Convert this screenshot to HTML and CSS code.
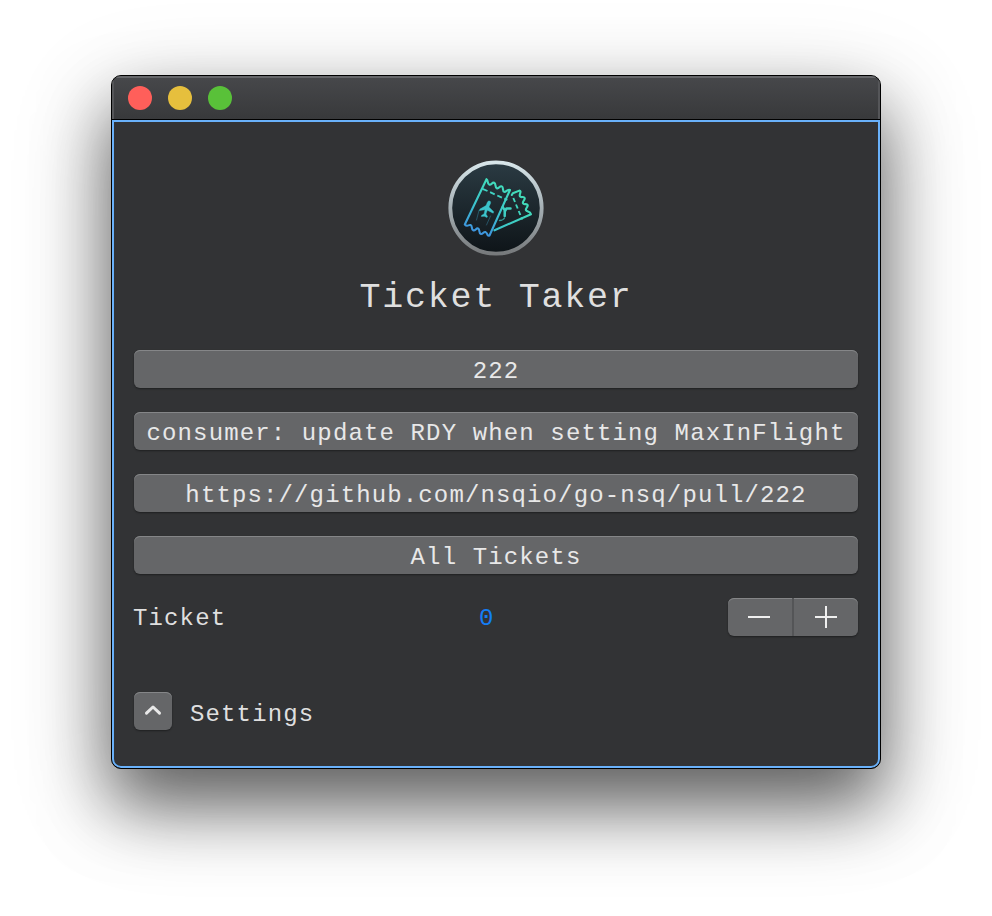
FILE: index.html
```
<!DOCTYPE html>
<html lang="en">
<head>
<meta charset="utf-8">
<title>Ticket Taker</title>
<link rel="stylesheet" href="styles.css">
</head>
<body>
<main class="window">
  <header class="titlebar">
    <span class="light close"></span>
    <span class="light minimize"></span>
    <span class="light zoom"></span>
  </header>
  <section class="content">
    <svg class="logo" viewBox="0 0 96 96" fill="none">
      <defs>
        <linearGradient id="rim" x1="0" y1="0" x2="0" y2="1"><stop stop-color="#d8e6ea"/><stop offset=".45" stop-color="#a9b4b9"/><stop offset="1" stop-color="#777a7c"/></linearGradient>
        <linearGradient id="face" x1="0" y1="0" x2="0" y2="1"><stop stop-color="#2b3b43"/><stop offset="1" stop-color="#0e1418"/></linearGradient>
        <linearGradient id="ink" gradientUnits="userSpaceOnUse" x1="50" y1="20" x2="30" y2="76"><stop stop-color="#42dfba"/><stop offset=".5" stop-color="#3cc4cc"/><stop offset="1" stop-color="#3e8ee0"/></linearGradient>
        <linearGradient id="ink2" gradientUnits="userSpaceOnUse" x1="80" y1="30" x2="46" y2="70"><stop stop-color="#43e0b4"/><stop offset="1" stop-color="#3bc3cc"/></linearGradient>
      </defs>
      <circle cx="48" cy="48" r="45.7" fill="url(#face)" stroke="url(#rim)" stroke-width="3.8"/>
      <g stroke="url(#ink)" stroke-width="2.1" stroke-linecap="round" stroke-linejoin="round">
        <path d="M16.800 64.500 38.500 19.200C40.500 20 39 23.800 41.200 24.600 43.400 25.500 44 21.800 46.200 22.700 48.300 23.700 46.600 27.300 48.800 28.300 51 29.200 51.600 25.500 53.800 26.400 55.900 27.400 54 31 56.200 31.900 58 32.600 58.700 29 62 30L41.500 75.500C38.700 76.600 39.800 73 37.600 72.100 35.400 71.300 34.800 74.800 32.700 73.900 30.500 73 32.200 69.400 30.100 68.500 28 67.700 27.400 71.200 25.200 70.300 23 69.400 24.700 65.900 22.600 65.100 20.500 64.300 19.500 67.500 16.800 64.500Z"/>
        <path stroke-linecap="butt" stroke-width="1.900" d="m34.500 28.800 5 2.200m2.600 1.200 4.600 2.100m2.600 1.200 4.600 2.100m2.400 1.100 3 1.300"/>
        <path d="M31 50.500 28.500 60M42.500 56l-4 9" stroke-width="1" opacity=".35"/>
      </g>
      <path fill="#3cc4cc" stroke="#3cc4cc" stroke-width=".4" stroke-linejoin="round" d="M41.500 41c1.200.2 1.300 1.500 1 2.400L40.900 47l4.800 4.700-.5 1.500-5.900-3-1.300 3.900 1.500 2.400-.5 1-2.700-1.200-3 .2.300-1.200 2.400-1.300 1-4.300-5.600.9.500-1.500 6.100-3.500 1.500-3.600c.4-.7.900-1.200 2-1Z"/>
      <g stroke="url(#ink2)" stroke-width="2.1" stroke-linecap="round" stroke-linejoin="round">
        <path d="M63.800 35 64.800 33.300 71.400 30.600C74.200 31.200 70.800 34.200 71.900 36.200 73 38.300 75.700 35.800 76.600 37.900 77.500 40 74 41.200 75 43.300 76 45.400 78.700 42.900 79.600 45 80.500 47.100 77 48.300 78 50.300 79 52.200 82 50.600 83 54.200L46.500 70.300"/>
        <path stroke-linecap="butt" stroke-width="1.900" d="m65.300 38 1.700 4m1 2.500 1.700 4m1 2.500 1.700 4m1 2.300.9 2.200"/>
        <path d="M62.500 48.500h-4l-1.800 3M54.800 47l2 3.500-.1 5.500" stroke-width="2.500"/><path d="M51.500 60.500c2.500 0 4-.8 5-2.500" stroke-width="1.300" opacity=".7"/>
      </g>
    </svg>
    <h1 class="title">Ticket Taker</h1>
    <div class="actions">
      <button class="button">222</button>
      <button class="button">consumer: update RDY when setting MaxInFlight</button>
      <button class="button">https://github.com/nsqio/go-nsq/pull/222</button>
      <button class="button">All Tickets</button>
    </div>
    <div class="ticket-row">
      <span class="name">Ticket</span>
      <span class="value">0</span>
      <div class="stepper">
        <button class="step"><svg viewBox="0 0 22 22" class="glyph"><path d="M0 11h22"/></svg></button>
        <button class="step"><svg viewBox="0 0 22 22" class="glyph"><path d="M0 11h22M11 0v22"/></svg></button>
      </div>
    </div>
    <div class="settings-row">
      <button class="disclosure"><svg viewBox="0 0 18 12" class="chevron"><path d="m2.500 9.200 6.500-6.200 6.500 6.200"/></svg></button>
      <span class="name">Settings</span>
    </div>
  </section>
</main>
</body>
</html>
```
FILE: styles.css
```
* { box-sizing: border-box; }
body {
  margin: 0;
  height: 916px;
  padding: 75px 111px 0;
  background: #fff;
  overflow: hidden;
  font: 24px/38px "Liberation Mono", monospace;
  letter-spacing: 1.13px;
  color: #dfdfdf;
}
.window {
  height: 694px;
  border: 1px solid #000;
  border-radius: 10px;
  overflow: hidden;
  background: #323335;
  display: flex;
  flex-direction: column;
  box-shadow: 0 36px 68px rgba(0, 0, 0, .54), 0 28px 100px rgba(0, 0, 0, .22);
}
.titlebar {
  height: 44px;
  flex: none;
  display: flex;
  gap: 16px;
  padding: 10px 16px 0;
  border-bottom: 1px solid #000;
  background: linear-gradient(#47484b, #38393b);
  box-shadow: inset 0 2px #66676a, inset 2px 0 #555659, inset -2px 0 #555659;
}
.light { width: 24px; height: 24px; border-radius: 50%; }
.close { background: #ff5f5a; }
.minimize { background: #e6bf3d; }
.zoom { background: #59c139; }
.content {
  flex: 1;
  border: 2px solid #69b1fa;
  border-radius: 0 0 9px 9px;
  padding: 38px 20px 0;
  display: flex;
  flex-direction: column;
}
.logo { width: 96px; height: 96px; align-self: center; }
.title {
  margin: 19px 0 29px;
  text-align: center;
  font-size: 35px;
  letter-spacing: 1.75px;
  font-weight: 400;
  line-height: 46px;
}
.actions { display: flex; flex-direction: column; gap: 24px; }
button { font: inherit; letter-spacing: inherit; color: #e8e8e8; border: 0; margin: 0; padding: 0; }
.button, .stepper, .disclosure {
  height: 38px;
  border-radius: 6px;
  background: #656668;
  box-shadow: inset 0 1px #858688, 0 1px 2px rgba(0, 0, 0, .4);
}
.button { padding: 6px 11px 0; line-height: 32px; white-space: nowrap; }
.ticket-row {
  margin-top: 24px;
  display: grid;
  grid-template-columns: 345px 1fr 130px;
  height: 38px;
}
.name, .value { padding-top: 2px; }
.ticket-row .name { margin-left: -1px; }
.value { color: #147ef6; }
.stepper { width: 130px; display: flex; }
.step { width: 66px; background: none; display: grid; place-items: center; }
.step:first-child { width: 64px; padding-right: 2px; }
.step + .step { border-left: 2px solid #545557; }
.glyph { width: 22px; height: 22px; stroke: #efefef; stroke-width: 2; }
.settings-row { display: flex; gap: 18px; margin-top: 56px; }
.settings-row .name { padding-top: 4px; }
.disclosure { width: 38px; display: grid; place-items: center; padding-bottom: 3px; }
.chevron { width: 18px; height: 12px; fill: none; stroke: #e8e8e8; stroke-width: 3; stroke-linecap: round; stroke-linejoin: round; }
```
